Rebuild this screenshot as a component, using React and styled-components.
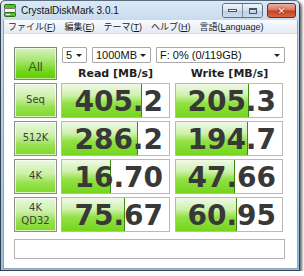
import styled, { createGlobalStyle } from 'styled-components';

const Global = createGlobalStyle`
  html, body { margin: 0; padding: 0; background: #ffffff; }
`;

const Window = styled.div`
  box-sizing: border-box;
  width: 300px;
  height: 271px;
  border: 1px solid #34404e;
  border-top-color: #5a6c80;
  border-radius: 5px 5px 0 0;
  padding: 0 1px 1px 2px;
  background: linear-gradient(180deg, #dbe8f5 0%, #c9dcef 18px, #a9cbe9 60%, #8fc3e6 100%);
  box-shadow: 2px 2px 3px rgba(0, 0, 0, 0.6);
  display: flex;
  flex-direction: column;
`;

const TitleBar = styled.div`
  height: 19px;
  display: flex;
  align-items: center;
  padding-left: 1px;
`;

const Title = styled.span`
  margin-left: 5px;
  font: 10px "Liberation Sans", sans-serif;
  color: #101010;
  flex: 1;
`;

const Controls = styled.div`
  display: flex;
  align-items: flex-start;
  align-self: flex-start;
  margin-top: 2px;
  margin-right: 2px;
`;

const CtrlGroup = styled.div`
  display: flex;
  border: 1px solid #5f6f82;
  border-radius: 3px;
  overflow: hidden;
  margin-right: 4px;
`;

const CtrlButton = styled.div`
  width: 19px;
  height: 13px;
  display: flex;
  align-items: center;
  justify-content: center;
  background: linear-gradient(180deg, #eef4fa 0%, #d5e2ef 50%, #bccfe3 52%, #cddcec 100%);
  border-left: ${p => (p.$first ? 'none' : '1px solid #7d8ea1')};
`;

const CloseButton = styled.div`
  width: 27px;
  height: 13px;
  border: 1px solid #6b2a20;
  border-radius: 3px;
  display: flex;
  align-items: center;
  justify-content: center;
  background: linear-gradient(180deg, #eab0a0 0%, #d9735c 48%, #c4401f 52%, #d46a45 100%);
  color: #ffffff;
  font: bold 9px "DejaVu Sans", sans-serif;
  text-shadow: 0 0 2px #5a1000;
`;

const Client = styled.div`
  flex: 1;
  display: flex;
  flex-direction: column;
  background: #ffffff;
  border: 1px solid #8ea4bb;
  border-top: none;
`;

const MenuBar = styled.div`
  height: 13px;
  display: flex;
  align-items: center;
  padding: 0;
  background: linear-gradient(180deg, #f9fbfe 0%, #eef3f9 50%, #e2eaf4 100%);
  border-bottom: 1px solid #d7e0ea;
`;

const MenuItem = styled.span`
  padding: 0 4px;
  margin-right: 1px;
  font: 9px "Liberation Sans", "Noto Sans CJK JP", sans-serif;
  color: #1a1a1a;
  white-space: nowrap;
  u { text-decoration: underline; text-underline-offset: 1px; }
`;

const Body = styled.div`
  flex: 1;
  padding: 13px 0 0 10px;
  display: flex;
  flex-direction: column;
`;

const Grid = styled.div`
  display: grid;
  grid-template-columns: 43px 109px 109px;
  column-gap: 4px;
  row-gap: 3px;
  & > :nth-child(3n) { margin-left: 1px; }
`;

const Top = styled.div`
  display: flex;
  margin-bottom: 3px;
`;

const AllButton = styled.div`
  box-sizing: border-box;
  width: 43px;
  height: 33px;
  border: 1px solid #7d8a78;
  box-shadow: inset 0 0 0 1px rgba(255, 255, 255, 0.6);
  background: linear-gradient(180deg, #d6f4be 0%, #a8e672 40%, #71d61a 75%, #5fcf04 100%);
  display: flex;
  align-items: center;
  justify-content: center;
  padding-top: 6px;
  font: 13px "Liberation Sans", sans-serif;
  color: #3c5a22;
`;

const TopRight = styled.div`
  margin-left: 4px;
  display: flex;
  flex-direction: column;
`;

const Selects = styled.div`
  display: flex;
  gap: 5px;
  margin-left: 1px;
`;

const Select = styled.div`
  box-sizing: border-box;
  width: ${p => p.$w}px;
  height: 16px;
  border: 1px solid #a9a9a9;
  border-radius: 1px;
  display: flex;
  align-items: center;
  padding: 0 4px 0 3px;
  font: 11px "Liberation Sans", sans-serif;
  color: #111;
  span { flex: 1; }
  &::after {
    content: "";
    border-left: 3px solid transparent;
    border-right: 3px solid transparent;
    border-top: 3px solid #222;
  }
`;

const Headers = styled.div`
  display: grid;
  grid-template-columns: 109px 109px;
  column-gap: 5px;
  margin-top: 4px;
`;

const Header = styled.div`
  text-align: center;
  font: bold 11px "DejaVu Sans", sans-serif;
  color: #1e1e1e;
`;

const Label = styled.div`
  box-sizing: border-box;
  height: 35px;
  border: 1px solid #8e8e8e;
  box-shadow: inset 0 0 0 1px rgba(255, 255, 255, 0.7);
  background: linear-gradient(180deg, #eaf8de 0%, #cdf0ab 40%, #97e150 70%, #80d929 100%);
  display: flex;
  align-items: center;
  justify-content: center;
  text-align: center;
  font: 10px/1.25 "DejaVu Sans", sans-serif;
  color: #3a3f36;
`;

const Cell = styled.div`
  position: relative;
  box-sizing: border-box;
  height: 35px;
  border: 1px solid #b9b9b9;
  background: #ffffff;
  display: flex;
  justify-content: flex-end;
  align-items: flex-end;
  padding: 0 6px 1px 0;
  font: bold 28px/1 "DejaVu Sans", sans-serif;
  color: #383838;
  overflow: hidden;
`;

const Fill = styled.div`
  position: absolute;
  left: 0;
  top: 0;
  bottom: 0;
  background: linear-gradient(180deg, #f0f9e8 0%, #cdf1aa 35%, #92e045 58%, #74d61c 100%);
  border-right: 1px solid #3d8a12;
`;

const Value = styled.span`
  position: relative;
`;

const Comment = styled.div`
  box-sizing: border-box;
  width: 271px;
  height: 20px;
  margin-top: 7px;
  border: 1px solid #b4b4b4;
  background: #ffffff;
`;

const rows = [
  { label: 'Seq', read: '405.2', write: '205.3', rf: 79, wf: 72 },
  { label: '512K', read: '286.2', write: '194.7', rf: 75, wf: 71 },
  { label: '4K', read: '16.70', write: '47.66', rf: 48, wf: 58 },
  { label: ['4K', 'QD32'], read: '75.67', write: '60.95', rf: 62, wf: 60 },
];

function AppIcon() {
  return (
    <svg width="12" height="13" viewBox="0 0 12 13">
      <rect x="0.5" y="0.5" width="11" height="4" rx="1" fill="#4cc61c" stroke="#2d6e14" />
      <rect x="0.5" y="4.5" width="11" height="4" rx="0.5" fill="#f4f4f4" stroke="#7a7a7a" />
      <rect x="0.5" y="8.5" width="11" height="4" rx="1" fill="#52c422" stroke="#2d6e14" />
      <rect x="2" y="10" width="4" height="1" fill="#ffffff" />
    </svg>
  );
}

export default function App() {
  return (
    <>
      <Global />
      <Window>
        <TitleBar>
          <AppIcon />
          <Title>CrystalDiskMark 3.0.1</Title>
          <Controls>
            <CtrlGroup>
              <CtrlButton $first>
                <svg width="9" height="3"><rect x="0.5" y="0.5" width="8" height="2" fill="#fff" stroke="#44546a" /></svg>
              </CtrlButton>
              <CtrlButton>
                <svg width="8" height="6"><rect x="0.5" y="0.5" width="7" height="5" fill="none" stroke="#44546a" /><rect x="1" y="1" width="6" height="1" fill="#44546a" /></svg>
              </CtrlButton>
            </CtrlGroup>
            <CloseButton>✕</CloseButton>
          </Controls>
        </TitleBar>
        <Client>
          <MenuBar>
            <MenuItem>ファイル(<u>F</u>)</MenuItem>
            <MenuItem>編集(<u>E</u>)</MenuItem>
            <MenuItem>テーマ(<u>T</u>)</MenuItem>
            <MenuItem>ヘルプ(<u>H</u>)</MenuItem>
            <MenuItem>言語(<u>L</u>anguage)</MenuItem>
          </MenuBar>
          <Body>
            <Top>
              <AllButton>All</AllButton>
              <TopRight>
                <Selects>
                  <Select $w={25}><span>5</span></Select>
                  <Select $w={59}><span>1000MB</span></Select>
                  <Select $w={129}><span>F: 0% (0/119GB)</span></Select>
                </Selects>
                <Headers>
                  <Header>Read [MB/s]</Header>
                  <Header>Write [MB/s]</Header>
                </Headers>
              </TopRight>
            </Top>
            <Grid>
              {rows.map(r => (
                <>
                  <Label key={r.read + 'l'}>
                    {Array.isArray(r.label) ? <span>{r.label[0]}<br />{r.label[1]}</span> : r.label}
                  </Label>
                  <Cell key={r.read}>
                    <Fill style={{ width: r.rf }} />
                    <Value>{r.read}</Value>
                  </Cell>
                  <Cell key={r.write}>
                    <Fill style={{ width: r.wf }} />
                    <Value>{r.write}</Value>
                  </Cell>
                </>
              ))}
            </Grid>
            <Comment />
          </Body>
        </Client>
      </Window>
    </>
  );
}
